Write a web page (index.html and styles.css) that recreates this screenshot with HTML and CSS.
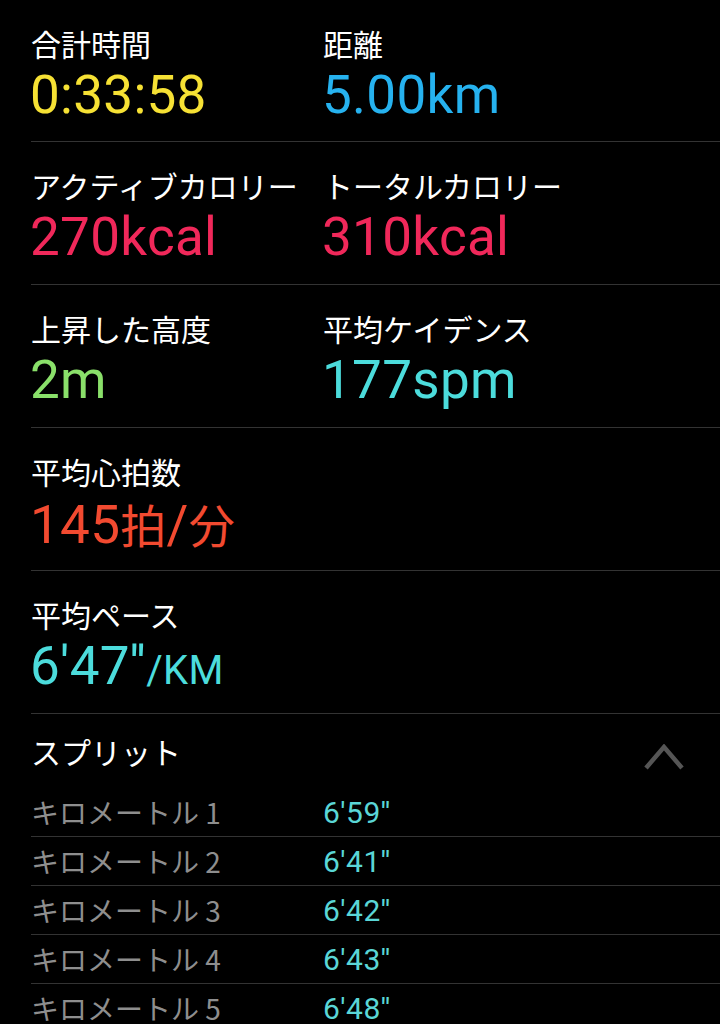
FILE: index.html
```html
<html>
  <head>
    <meta charset="utf-8">
    <link rel="stylesheet" href="styles.css">
  </head>
  <body>
    <div class="summary">
      <!-- time / distance -->
      <div class="row first">
        <div class="cell">
          <div class="label">合計時間</div>
          <div class="value yellow">0:33:58</div>
        </div>
        <div class="cell">
          <div class="label">距離</div>
          <div class="value blue">5.00km</div>
        </div>
      </div>
      <!-- calories -->
      <div class="row">
        <div class="cell">
          <div class="label">アクティブカロリー</div>
          <div class="value pink">270kcal</div>
        </div>
        <div class="cell">
          <div class="label">トータルカロリー</div>
          <div class="value pink">310kcal</div>
        </div>
      </div>
      <!-- elevation / cadence -->
      <div class="row">
        <div class="cell">
          <div class="label">上昇した高度</div>
          <div class="value green">2m</div>
        </div>
        <div class="cell">
          <div class="label">平均ケイデンス</div>
          <div class="value teal">177spm</div>
        </div>
      </div>
      <div class="row">
        <div class="cell">
          <div class="label">平均心拍数</div>
          <div class="value red">145<span class="kanji">拍</span>/<span class="kanji">分</span></div>
        </div>
      </div>
      <div class="row">
        <div class="cell">
          <div class="label">平均ペース</div>
          <div class="value teal">6'47''<span class="unit">/km</span></div>
        </div>
      </div>
      <!-- splits -->
      <div class="split-head">
        <span class="split-title">スプリット</span>
        <svg class="chevron" width="40" height="26" viewBox="0 0 40 26">
          <polyline points="2,24 20,3 38,24" fill="none" stroke="#555" stroke-width="4.5"/>
        </svg>
      </div>
      <div class="split"><span class="km">キロメートル 1</span><span class="pace">6'59''</span></div>
      <div class="split"><span class="km">キロメートル 2</span><span class="pace">6'41''</span></div>
      <div class="split"><span class="km">キロメートル 3</span><span class="pace">6'42''</span></div>
      <div class="split"><span class="km">キロメートル 4</span><span class="pace">6'43''</span></div>
      <div class="split"><span class="km">キロメートル 5</span><span class="pace">6'48''</span></div>
    </div>
  </body>
</html>
```

FILE: styles.css
```css
body{
  margin: 0;
  background-color: #000;
  color: #fff;
  font-family: Roboto, "Noto Sans CJK JP", sans-serif;
  overflow: hidden;
}
.summary{
  padding-left: 31px;
}
.row{
  display: grid;
  grid-template-columns: 292px 1fr;
  height: 143px;
  border-bottom: 1px solid #333;
  box-sizing: border-box;
}
.row.first{
  height: 142px;
}
.cell{
  padding-top: 24px;
}
.label{
  font-family: "Noto Sans CJK JP", sans-serif;
  font-size: 30px;
  line-height: 38px;
  white-space: nowrap;
}
.value{
  font-size: 53px;
  line-height: 62px;
  margin-top: 2px;
  margin-left: -1px;
  letter-spacing: 0.3px;
  white-space: nowrap;
}
.kanji{
  font-family: "Noto Sans CJK JP", sans-serif;
  font-size: 46px;
}
.unit{
  font-size: 40px;
  text-transform: uppercase;
}
.yellow{ color: #f6e134; }
.blue{ color: #26b2ef; }
.pink{ color: #f0285a; }
.green{ color: #8ae06a; }
.teal{ color: #4cdcdc; }
.red{ color: #f24a30; }
.split-head{
  display: flex;
  justify-content: space-between;
  align-items: center;
  height: 74px;
  padding-right: 36px;
}
.split-title{
  font-family: "Noto Sans CJK JP", sans-serif;
  font-size: 30px;
}
.chevron{
  margin-top: 12px;
}
.split{
  display: grid;
  grid-template-columns: 292px 1fr;
  height: 49px;
  align-items: center;
  border-bottom: 1px solid #333;
  box-sizing: border-box;
}
.km{
  font-family: "Noto Sans CJK JP", sans-serif;
  font-size: 28px;
  color: #8e8e8e;
}
.pace{
  font-size: 30px;
  letter-spacing: 0.5px;
  color: #5ad6d6;
}
```
